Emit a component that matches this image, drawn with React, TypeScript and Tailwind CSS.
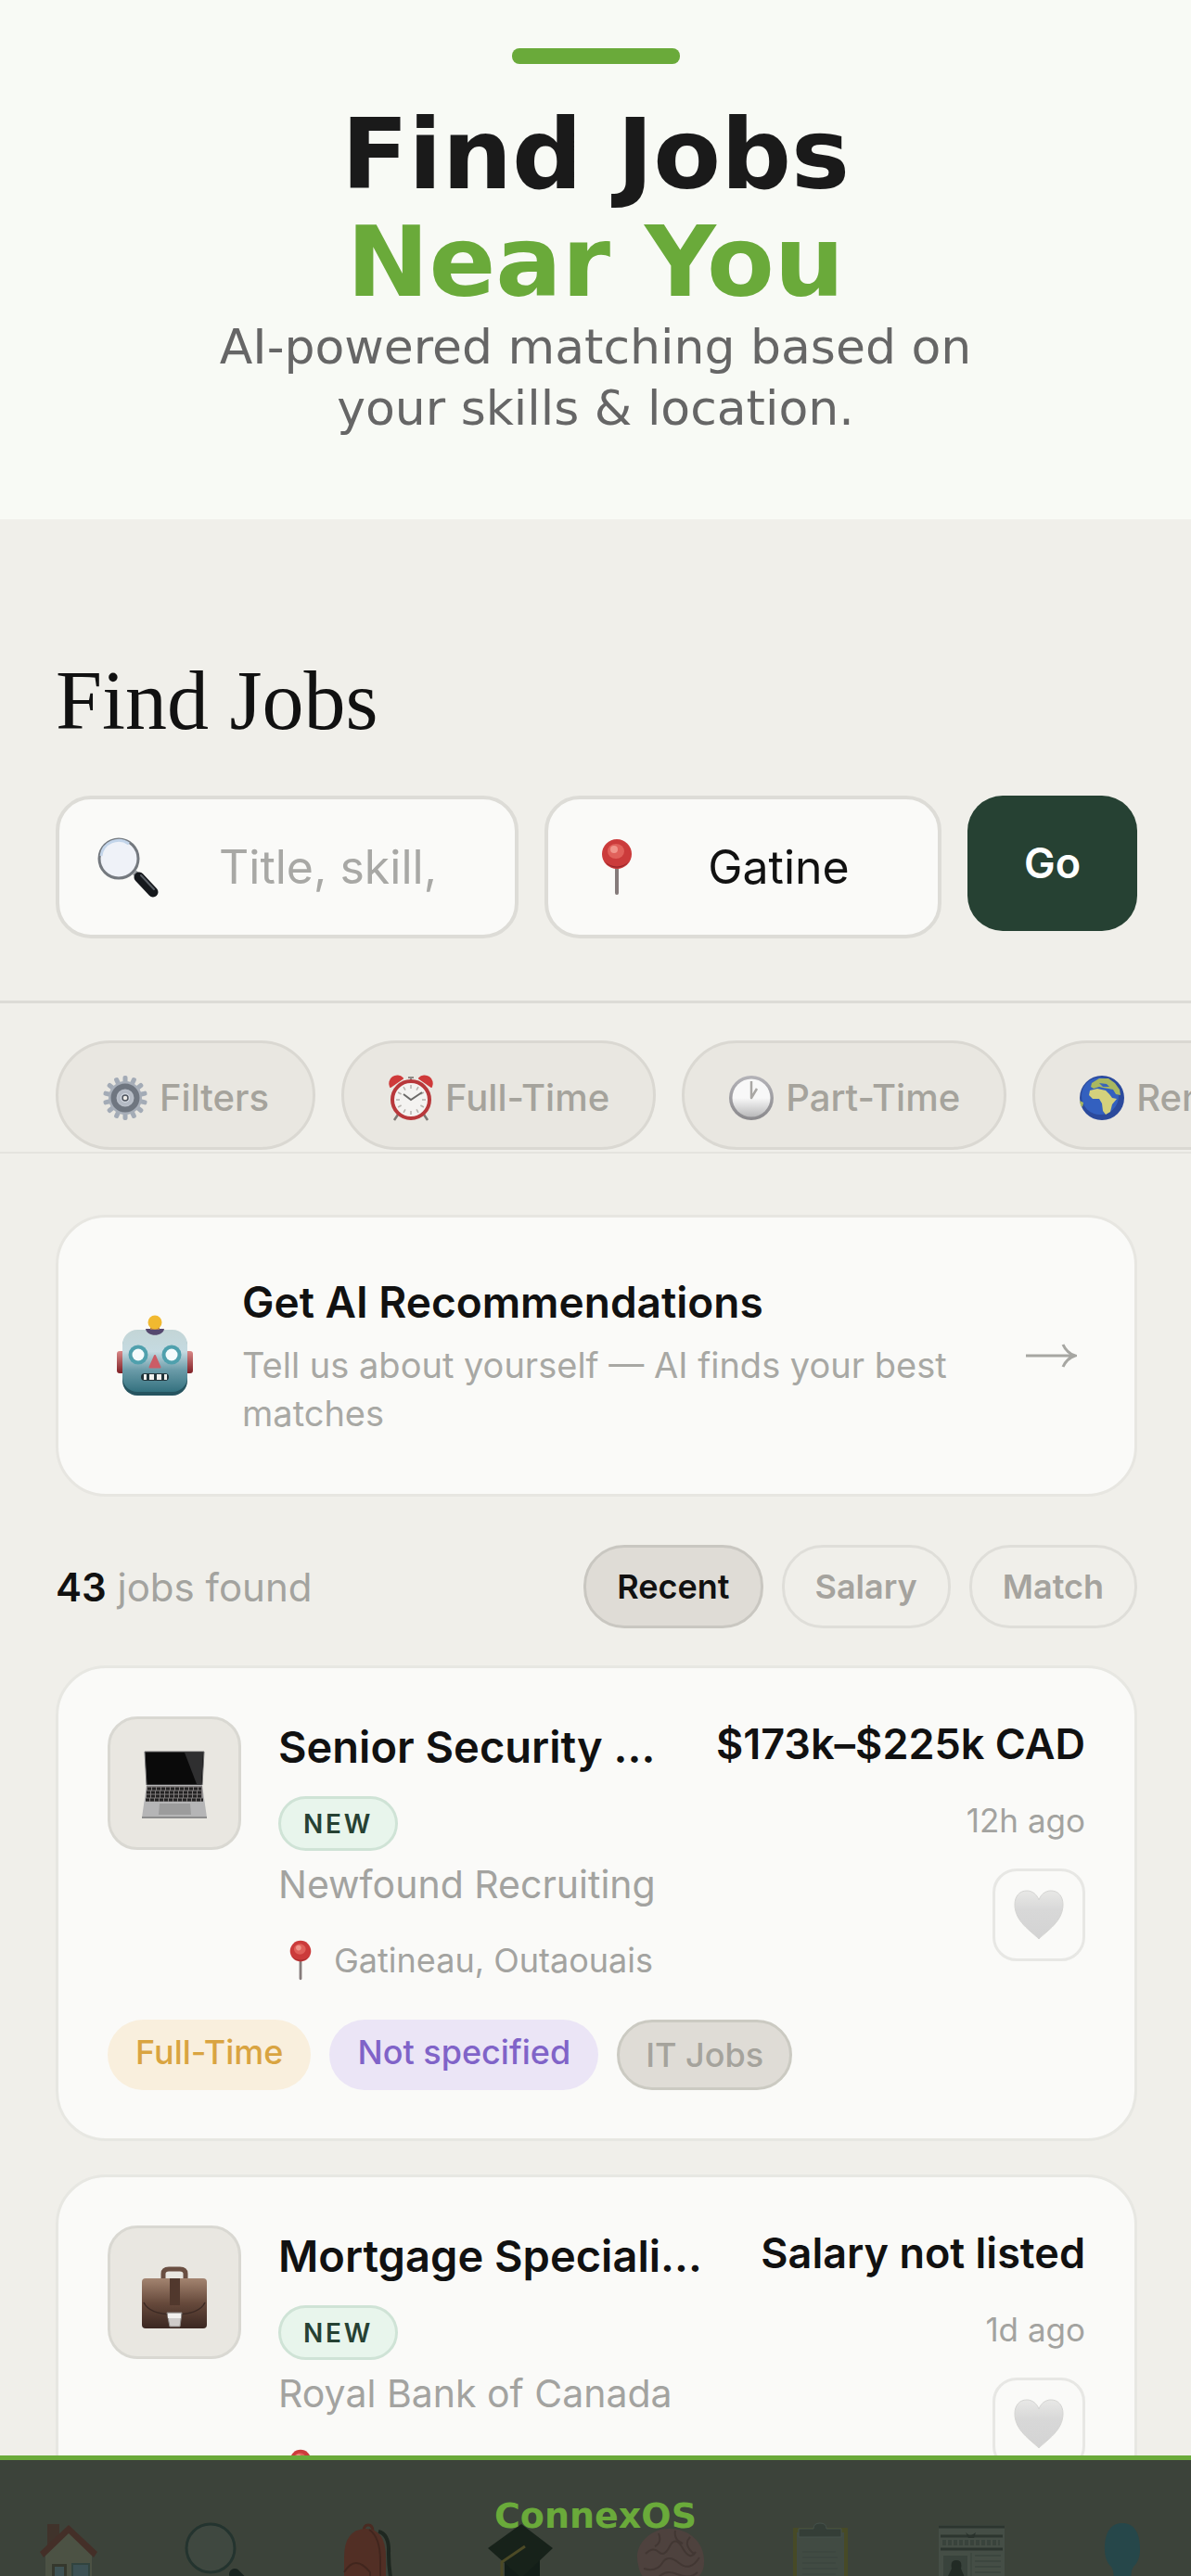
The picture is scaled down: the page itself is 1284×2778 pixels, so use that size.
import { useState } from "react";

type IconProps = { className?: string };

function SearchIcon({ className }: IconProps) {
  return (
    <svg viewBox="0 0 68 68" className={className} aria-hidden="true">
      <path d="M41 40 L47 45" stroke="#8b8f94" strokeWidth="6" />
      <path d="M46 45 L61 61" stroke="#15181c" strokeWidth="11" strokeLinecap="round" />
      <path d="M48 43 L62 58" stroke="#5a5f66" strokeWidth="2" strokeLinecap="round" />
      <circle cx="24" cy="25" r="21" fill="#eff2f8" stroke="#74797f" strokeWidth="3" />
      <path d="M5 22a19 19 0 0 1 30 -13" fill="none" stroke="#c3d5ea" strokeWidth="3" />
    </svg>
  );
}

function PinIcon({ className }: IconProps) {
  return (
    <svg viewBox="0 0 68 68" className={className} aria-hidden="true">
      <rect x="32" y="32" width="4" height="32" rx="2" fill="#857b7b" />
      <circle cx="34" cy="20" r="16" fill="#cb3b3b" />
      <path d="M21 28a16 16 0 0 0 26 0 a18 18 0 0 1 -26 0" fill="#93262a" />
      <ellipse cx="33" cy="17" rx="9" ry="8" fill="#e0605a" />
      <circle cx="31" cy="15" r="4" fill="#f0948a" />
    </svg>
  );
}

function GearIcon({ className }: IconProps) {
  const teeth = Array.from({ length: 14 }, (_, i) => (i * 360) / 14);
  return (
    <svg viewBox="0 0 50 50" className={className} aria-hidden="true">
      {teeth.map((angle) => (
        <rect
          key={angle}
          x="22.5"
          y="1"
          width="5"
          height="10"
          rx="2"
          fill="#a3abb6"
          transform={`rotate(${angle} 25 25)`}
        />
      ))}
      <circle cx="25" cy="25" r="18" fill="#a7aeb8" />
      <circle cx="25" cy="25" r="12.5" fill="#b9bfc8" stroke="#6f7680" strokeWidth="6" />
      <circle cx="25" cy="25" r="6.5" fill="#d5dae2" stroke="#b4bac4" strokeWidth="3" />
      <circle cx="25" cy="25" r="3" fill="#eceae6" stroke="#4f555e" strokeWidth="1.5" />
    </svg>
  );
}

function AlarmIcon({ className }: IconProps) {
  const ticks = Array.from({ length: 12 }, (_, i) => i * 30);
  return (
    <svg viewBox="0 0 50 50" className={className} aria-hidden="true">
      <path d="M11 43l-4 6M39 43l4 6" stroke="#7c7874" strokeWidth="2.5" />
      <path d="M25 7V2M22 3h6" stroke="#8d8985" strokeWidth="2" />
      <path d="M3 13a8 8 0 0 1 13 -9z" fill="#cf3a3a" stroke="#cf3a3a" strokeWidth="2" strokeLinejoin="round" />
      <path d="M47 13a8 8 0 0 0 -13 -9z" fill="#cf3a3a" stroke="#cf3a3a" strokeWidth="2" strokeLinejoin="round" />
      <circle cx="25" cy="27" r="20" fill="#f4f3f1" stroke="#b8383b" strokeWidth="4" />
      {ticks.map((angle) => (
        <path key={angle} d="M25 11v4" stroke="#b5b1ac" strokeWidth="1.5" transform={`rotate(${angle} 25 27)`} />
      ))}
      <path d="M17 21l8 6 12-8" fill="none" stroke="#6b6a68" strokeWidth="2" />
    </svg>
  );
}

function ClockIcon({ className }: IconProps) {
  return (
    <svg viewBox="0 0 50 50" className={className} aria-hidden="true">
      <defs>
        <linearGradient id="clockRim" x1="0" y1="0" x2="0" y2="1">
          <stop offset="0" stopColor="#b4b3b8" />
          <stop offset="1" stopColor="#8a898c" />
        </linearGradient>
        <linearGradient id="clockFace" x1="0" y1="0" x2="0" y2="1">
          <stop offset="0.5" stopColor="#f8f8f8" />
          <stop offset="1" stopColor="#b9b9ba" />
        </linearGradient>
      </defs>
      <circle cx="25" cy="25" r="24" fill="url(#clockRim)" />
      <circle cx="25" cy="25" r="20.5" fill="url(#clockFace)" />
      <path d="M25 7v18l6-10" fill="none" stroke="#a9a7a4" strokeWidth="2.5" strokeLinejoin="round" />
    </svg>
  );
}

function GlobeIcon({ className }: IconProps) {
  return (
    <svg viewBox="0 0 50 50" className={className} aria-hidden="true">
      <circle cx="25" cy="25" r="24" fill="#2b4a9c" />
      <circle cx="23" cy="23" r="20" fill="#3360bf" />
      <path d="M14 9l8-5 10 0 7 5 5 7 1 6-5-1-3-5-5-1-6-1-4-1-6 2-3-2z" fill="#a9b860" />
      <path d="M12 17l8-2 9 2 4 4 3 4 5 1-5 6-2 8-5 3-3-4-1-8-3-5-7 0-4-4z" fill="#d4d17c" />
      <path d="M22 9l8 1 3 3-7 0z" fill="#3a65b8" />
      <path d="M1 28l4 2-1 5-2-2z" fill="#a9b860" />
    </svg>
  );
}

function RobotIcon({ className }: IconProps) {
  return (
    <svg viewBox="0 0 84 88" className={className} aria-hidden="true">
      <defs>
        <linearGradient id="robotHead" x1="0" y1="0" x2="0" y2="1">
          <stop offset="0" stopColor="#c3d5d6" />
          <stop offset="0.35" stopColor="#c5dae1" />
          <stop offset="0.65" stopColor="#6a9ba8" />
          <stop offset="1" stopColor="#34717f" />
        </linearGradient>
        <linearGradient id="robotEar" x1="0" y1="0" x2="0" y2="1">
          <stop offset="0" stopColor="#d98787" />
          <stop offset="1" stopColor="#7f2026" />
        </linearGradient>
      </defs>
      <rect x="1" y="39" width="10" height="24" rx="3" fill="url(#robotEar)" />
      <rect x="73" y="39" width="10" height="24" rx="3" fill="url(#robotEar)" />
      <rect x="7" y="18" width="70" height="69" rx="16" fill="#265460" />
      <rect x="7" y="16" width="70" height="67" rx="16" fill="url(#robotHead)" />
      <path d="M32 15h20c-1 9-19 9-20 0z" fill="#55496f" />
      <path d="M37 16V8h10v8z" fill="#b07b4e" />
      <circle cx="42" cy="8" r="7.5" fill="#f1b930" />
      <circle cx="24" cy="43" r="10.5" fill="#4fa0ad" />
      <circle cx="24" cy="43" r="6.5" fill="#f4fbfc" />
      <circle cx="60" cy="43" r="10.5" fill="#4fa0ad" />
      <circle cx="60" cy="43" r="6.5" fill="#f4fbfc" />
      <path d="M42 44l5.500 12.500h-11z" fill="#cb5c66" stroke="#cb5c66" strokeWidth="2" strokeLinejoin="round" />
      <rect x="27" y="63" width="30" height="8" rx="4" fill="#22343a" />
      <path d="M30 67h3M36 67h5M44 67h5M52 67h3" stroke="#f1f1ee" strokeWidth="6" />
    </svg>
  );
}

function LaptopIcon({ className }: IconProps) {
  return (
    <svg viewBox="0 0 72 74" className={className} aria-hidden="true">
      <path d="M4 1h64l-2 36H6z" fill="#0a0a0a" stroke="#6f6f70" strokeWidth="1" />
      <path d="M47 2h20l-2 34h-5z" fill="#2f2f30" />
      <path d="M6 37h60l5 35H1z" fill="#b5b5b6" />
      <path d="M6 38h60l1 17H5z" fill="#807c7c" />
      <path d="M7 41h58M6 45h60M6 49h60M5 53h62" stroke="#232222" strokeWidth="3" strokeDasharray="4 1" />
      <path d="M20 57h33l1 12H19z" fill="#9c9c9c" />
      <path d="M1 71h70v2H1z" fill="#8d8d8d" />
    </svg>
  );
}

function BriefcaseIcon({ className }: IconProps) {
  return (
    <svg viewBox="0 0 72 74" className={className} aria-hidden="true">
      <defs>
        <linearGradient id="bagBody" x1="0" y1="0" x2="0" y2="1">
          <stop offset="0" stopColor="#a38470" />
          <stop offset="0.5" stopColor="#66493b" />
          <stop offset="1" stopColor="#3a2721" />
        </linearGradient>
      </defs>
      <path d="M24 20V15q0-5 6-5h12q6 0 6 5v5" fill="none" stroke="#6a4f42" strokeWidth="5" />
      <rect x="1" y="20" width="70" height="54" rx="4" fill="url(#bagBody)" />
      <path d="M3 46q6 13 33 13t33-13" fill="none" stroke="#3c2a24" strokeWidth="1.5" />
      <rect x="31" y="20" width="11" height="29" fill="#51382d" />
      <path d="M28 57h16l-2 15H31z" fill="#cfccca" stroke="#8d8986" strokeWidth="1" />
      <path d="M29 58h14v5H29z" fill="#f2f0ee" />
    </svg>
  );
}

function HeartIcon({ className }: IconProps) {
  return (
    <svg viewBox="0 0 54 54" className={className} aria-hidden="true">
      <defs>
        <linearGradient id="heartFill" x1="0" y1="0" x2="0" y2="1">
          <stop offset="0" stopColor="#e8e8e6" />
          <stop offset="0.4" stopColor="#d8d8d8" />
          <stop offset="1" stopColor="#d3d3d3" />
        </linearGradient>
      </defs>
      <path
        d="M27 53C18 44 1 34 1 16 1 7 6 1 14 1c6 0 11 4 13 10C29 5 34 1 40 1c8 0 13 6 13 15 0 18-17 28-26 37z"
        fill="url(#heartFill)"
        stroke="#d5d5d3"
      />
    </svg>
  );
}

function ArrowIcon({ className }: IconProps) {
  return (
    <svg viewBox="0 0 56 28" className={className} aria-hidden="true">
      <path d="M1 14h52M41 2q4 9 13 12-9 3-13 12" fill="none" stroke="#a6a6a2" strokeWidth="3" />
    </svg>
  );
}

const tabIcons = [
  {
    label: "Home",
    art: (
      <>
        <rect x="14" y="4" width="13" height="26" fill="#40332b" />
        <path d="M12 30L37 10l25 22v48H12z" fill="#4c5244" />
        <path d="M6 34L37 5l31 29-4 6L37 14 10 40z" fill="#442f28" />
        <rect x="19" y="47" width="16" height="33" fill="#35382d" />
        <rect x="22" y="50" width="10" height="12" fill="#3e5254" />
        <rect x="41" y="47" width="18" height="20" fill="#3c5154" stroke="#31443f" strokeWidth="2" />
      </>
    ),
  },
  {
    label: "Search",
    art: (
      <>
        <circle cx="28" cy="30" r="26" fill="#3f4840" stroke="#24342f" strokeWidth="3" />
        <path d="M54 58l22 22" stroke="#18231f" strokeWidth="12" strokeLinecap="round" />
      </>
    ),
  },
  {
    label: "Backpack",
    art: (
      <>
        <path d="M30 12q0-7 5-7t5 7" fill="none" stroke="#4a2b22" strokeWidth="3" />
        <path d="M46 12q12 3 11 24 0 22 6 44" fill="none" stroke="#1e2720" strokeWidth="4" />
        <path d="M9 80V40Q9 10 32 9q22 0 22 31v40z" fill="#522f25" />
        <path d="M36 10q12 8 12 34v36M9 56q12-20 28 0v24" fill="none" stroke="#41261e" strokeWidth="2" />
      </>
    ),
  },
  {
    label: "Learning",
    art: (
      <>
        <path d="M20 36v24q10 18 20 18t18-18V36z" fill="#131e18" />
        <path d="M2 30L38 4l34 26-34 32z" fill="#17221a" />
        <path d="M42 28L17 45v35" fill="none" stroke="#4c4a26" strokeWidth="3" />
        <path d="M17 58l5 22H12z" fill="#4c4a26" />
      </>
    ),
  },
  {
    label: "AI coach",
    art: (
      <>
        <path d="M2 48C-4 26 16 8 36 9c22 0 38 16 37 36 0 12-6 18-16 20l-8 13-10-8H20C10 66 4 60 2 48z" fill="#4e423e" />
        <path
          d="M10 36q8-8 14-2t12-6 14 2 14 4M8 52q14 4 20-6t18 0 22-6M24 14q4 10-4 14M42 11q-2 10 8 14M58 18q-8 8 4 18M22 64q8-12 22-6t22-2"
          fill="none"
          stroke="#423733"
          strokeWidth="2"
        />
      </>
    ),
  },
  {
    label: "Applications",
    art: (
      <>
        <rect x="7" y="8" width="59" height="74" fill="#474a26" />
        <rect x="11" y="13" width="51" height="68" fill="#414b43" />
        <path d="M13 18V9h16q0-6 7-6t7 6h16v9z" fill="#343e37" stroke="#46524c" strokeWidth="1" />
        <path d="M17 34h36M17 40h38M17 46h36M17 52h38M17 58h36M17 64h38" stroke="#3d4740" strokeWidth="2" />
      </>
    ),
  },
  {
    label: "News",
    art: (
      <>
        <rect x="1" y="5" width="71" height="75" fill="#454e46" />
        <path d="M1 7h71M3 17h67M3 31h67" stroke="#2c352f" strokeWidth="3" />
        <path d="M30 13l5 4 6-4-2 6h-6z" fill="#29322c" />
        <path d="M5 24h62" stroke="#39433c" strokeWidth="6" strokeDasharray="4 2" />
        <path d="M36 35v40" stroke="#39423b" />
        <rect x="6" y="38" width="26" height="29" fill="#39433c" />
        <path d="M8 66l7-14q-2-9 5-9t5 9l6 14z" fill="#222b25" />
        <path d="M40 38h28M40 44h28M40 50h28M40 56h28M40 62h28" stroke="#3c463f" strokeWidth="2" />
      </>
    ),
  },
  {
    label: "Profile",
    art: (
      <path
        d="M27 64q2-8-2-14c-5-4-7-12-7-19C18 12 25 3 37 3s19 9 19 28c0 7-2 15-7 19q-4 6-2 14l23 9v9H4v-9z"
        fill="#26474a"
      />
    ),
  },
];

const filters = [
  { label: "Filters", Icon: GearIcon },
  { label: "Full-Time", Icon: AlarmIcon },
  { label: "Part-Time", Icon: ClockIcon },
  { label: "Remote", Icon: GlobeIcon },
];

const sortOptions = ["Recent", "Salary", "Match"];

const jobs = [
  {
    title: "Senior Security …",
    company: "Newfound Recruiting",
    location: "Gatineau, Outaouais",
    salary: "$173k–$225k CAD",
    posted: "12h ago",
    category: "IT Jobs",
    Icon: LaptopIcon,
  },
  {
    title: "Mortgage Speciali…",
    company: "Royal Bank of Canada",
    location: "Gatineau, Outaouais",
    salary: "Salary not listed",
    posted: "1d ago",
    category: "Finance",
    Icon: BriefcaseIcon,
  },
];

function JobCard({ job }: { job: (typeof jobs)[number] }) {
  const { Icon } = job;
  return (
    <article className="rounded-[54px] border-[3px] border-[#e7e7e2] bg-[#fafaf8] px-[53px] pt-[52px] pb-[52px]">
      <div className="flex items-start">
        <div className="flex h-36 w-36 shrink-0 items-center justify-center rounded-[32px] border-[3px] border-[#d9d8d2] bg-[#e9e7e1] pt-1">
          <Icon className="h-[74px] w-[72px]" />
        </div>
        <div className="ml-10 min-w-0 flex-1">
          <h2 className="text-[47px] leading-[66px] font-semibold whitespace-nowrap text-[#111111]">{job.title}</h2>
          <div className="mt-5 flex">
            <span className="flex h-[59px] items-center rounded-full border-[3px] border-[#cfe3d6] bg-[#e8f5ec] px-6 text-[28px] font-semibold tracking-widest text-[#264133]">
              NEW
            </span>
          </div>
          <p className="mt-2 text-[41px] leading-[56px] whitespace-nowrap text-[#a3a3a0]">{job.company}</p>
          <p className="mt-[30px] flex items-center gap-3 text-[36px] leading-[48px] whitespace-nowrap text-[#a3a3a0]">
            <PinIcon className="h-12 w-12" />
            {job.location}
          </p>
        </div>
        <div className="ml-7 flex shrink-0 flex-col items-end">
          <p className="text-[45px] leading-[60px] font-semibold text-[#111111]">{job.salary}</p>
          <p className="mt-7 text-[35px] leading-[48px] text-[#a3a3a0]">{job.posted}</p>
          <button
            type="button"
            aria-label="Save job"
            className="mt-7 flex h-[100px] w-[100px] items-center justify-center rounded-[26px] border-[3px] border-[#e7e7e4]"
          >
            <HeartIcon className="h-[54px] w-[54px]" />
          </button>
        </div>
      </div>
      <div className="mt-10 flex gap-5 text-[36px] font-medium">
        <span className="h-[76px] rounded-full bg-[#f9efdd] px-[30px] leading-[70px] text-[#d9a441]">Full-Time</span>
        <span className="h-[76px] rounded-full bg-[#ebe5f6] px-[30px] leading-[70px] text-[#8063c8]">Not specified</span>
        <span className="h-[76px] rounded-full border-[3px] border-[#cbcac2] bg-[#dfdcd6] px-7 leading-[70px] text-[#a5a39c]">
          {job.category}
        </span>
      </div>
    </article>
  );
}

export default function App() {
  const [query, setQuery] = useState("");
  const [place, setPlace] = useState("Gatine");
  const [sort, setSort] = useState("Recent");

  return (
    <div className="relative h-screen overflow-hidden bg-[#f0efea] font-['Inter',sans-serif]">
      <header className="flex h-[560px] flex-col items-center bg-[#f8faf5] pt-[52px] text-center font-['DejaVu_Sans',sans-serif]">
        <div className="h-[17px] w-[181px] rounded-lg bg-[#6aaa3a]" />
        <h1 className="mt-10 text-[106px] leading-[116px] font-bold text-[#1a1a1a]">
          Find Jobs
          <span className="block text-[#6aaa3a]">Near You</span>
        </h1>
        <p className="text-[52px] leading-[66px] text-[#666666]">
          AI-powered matching based on
          <br />
          your skills &amp; location.
        </p>
      </header>

      <main>
        <section className="border-b-[3px] border-[#dcdbd6] pt-[142px] pr-[58px] pb-[67px] pl-[60px]">
          <h2 className="font-['Liberation_Serif',serif] text-[90px] leading-[108px] text-[#111111]">Find Jobs</h2>
          <form
            className="mt-12 grid grid-cols-[7fr_6fr_183px] items-start gap-7"
            onSubmit={(e) => e.preventDefault()}
          >
            <label className="flex h-[154px] items-center gap-16 rounded-[38px] border-4 border-[#dddcd7] bg-[#fafaf8] px-10">
              <SearchIcon className="h-[68px] w-[68px] shrink-0" />
              <input
                type="text"
                aria-label="Job title or skill"
                placeholder="Title, skill,"
                value={query}
                onChange={(e) => setQuery(e.target.value)}
                className="w-full min-w-0 text-[50px] text-[#111111] outline-none placeholder:text-[#a8a8a5]"
              />
            </label>
            <label className="flex h-[154px] items-center gap-16 rounded-[38px] border-4 border-[#dddcd7] bg-[#fafaf8] px-10">
              <PinIcon className="h-[68px] w-[68px] shrink-0" />
              <input
                type="text"
                aria-label="Location"
                value={place}
                onChange={(e) => setPlace(e.target.value)}
                className="w-full min-w-0 text-[50px] text-[#111111] outline-none"
              />
            </label>
            <button type="submit" className="h-[146px] rounded-[38px] bg-[#264133] text-[45px] font-semibold text-white">
              Go
            </button>
          </form>
        </section>

        <div className="flex gap-7 overflow-hidden border-b-2 border-[#e4e3de] pt-10 pr-[58px] pb-[2px] pl-[60px]">
          {filters.map(({ label, Icon }) => (
            <button
              key={label}
              type="button"
              className="flex h-[118px] shrink-0 items-center gap-3 rounded-full border-[3px] border-[#dad8d2] bg-[#e9e7e1] px-[47px] pt-[6px] text-[40px] font-medium text-[#a5a39c]"
            >
              <Icon className="h-[50px] w-[50px]" />
              {label}
            </button>
          ))}
        </div>

        <div className="pt-[66px] pr-[58px] pl-[60px]">
          <button
            type="button"
            className="flex w-full items-center rounded-[54px] border-[3px] border-[#e7e6e1] bg-[#fafaf8] px-[62px] py-[61px] text-left"
          >
            <RobotIcon className="h-[88px] w-[84px] shrink-0" />
            <span className="ml-[52px] flex-1">
              <span className="block text-[46px] leading-[60px] font-semibold text-[#111111]">
                Get AI Recommendations
              </span>
              <span className="mt-3 block text-[38px] leading-[52px] text-[#a8a8a4]">
                Tell us about yourself — AI finds your best matches
              </span>
            </span>
            <ArrowIcon className="ml-10 h-7 w-14 shrink-0" />
          </button>

          <div className="mt-[52px] flex items-center justify-between">
            <p className="text-[42px] text-[#a3a39f]">
              <strong className="font-semibold text-[#111111]">43</strong> jobs found
            </p>
            <div className="flex gap-5">
              {sortOptions.map((option) => (
                <button
                  key={option}
                  type="button"
                  onClick={() => setSort(option)}
                  className={
                    option === sort
                      ? "h-[90px] rounded-[44px] border-[3px] border-[#c9c7c1] bg-[#dfdcd6] px-[33px] text-[36px] font-semibold text-[#111111]"
                      : "h-[90px] rounded-[44px] border-[3px] border-[#dfded9] px-[33px] text-[36px] font-semibold text-[#a5a39e]"
                  }
                >
                  {option}
                </button>
              ))}
            </div>
          </div>

          <div className="mt-10 flex flex-col gap-9">
            {jobs.map((job) => (
              <JobCard key={job.title} job={job} />
            ))}
          </div>
        </div>
      </main>

      <footer className="absolute inset-x-0 bottom-0 h-[130px] overflow-hidden border-t-[5px] border-[#6aaa3a] bg-[#3c433a]">
        <nav className="flex justify-between px-[37px] pt-[65px]">
          {tabIcons.map(({ label, art }) => (
            <a key={label} href="#" aria-label={label}>
              <svg viewBox="0 0 74 80" className="h-20 w-[74px]" aria-hidden="true">
                {art}
              </svg>
            </a>
          ))}
        </nav>
        <p className="absolute inset-x-0 top-9 text-center font-['DejaVu_Sans',sans-serif] text-[38px] leading-[48px] font-bold text-[#6aaa3a]">
          ConnexOS
        </p>
      </footer>
    </div>
  );
}
